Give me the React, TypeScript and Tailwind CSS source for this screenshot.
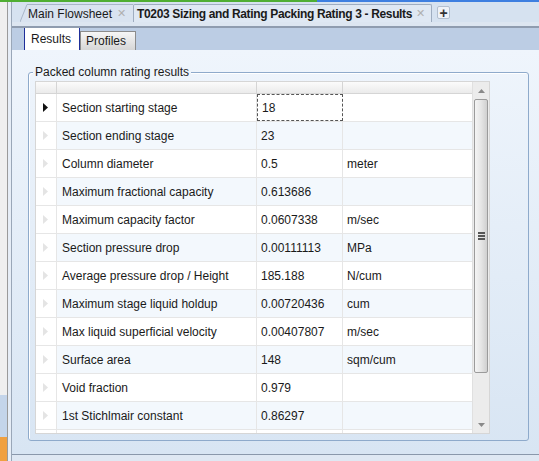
const rows: [string, string, string][] = [
  ["Section starting stage", "18", ""],
  ["Section ending stage", "23", ""],
  ["Column diameter", "0.5", "meter"],
  ["Maximum fractional capacity", "0.613686", ""],
  ["Maximum capacity factor", "0.0607338", "m/sec"],
  ["Section pressure drop", "0.00111113", "MPa"],
  ["Average pressure drop / Height", "185.188", "N/cum"],
  ["Maximum stage liquid holdup", "0.00720436", "cum"],
  ["Max liquid superficial velocity", "0.00407807", "m/sec"],
  ["Surface area", "148", "sqm/cum"],
  ["Void fraction", "0.979", ""],
  ["1st Stichlmair constant", "0.86297", ""],
];

const Arrow = ({ active }: { active: boolean }) => (
  <svg width="6" height="9" viewBox="0 0 6 9">
    <path d="M0 0 L5 4.5 L0 9 Z" fill={active ? "#111" : "#e4e4e4"} />
  </svg>
);

const Scrollbar = () => (
  <div className="w-[17px] shrink-0 flex flex-col bg-[#ececec] border-l border-[#e0e0e0]">
    <div className="h-[17px] shrink-0 flex items-center justify-center">
      <svg width="7" height="4" viewBox="0 0 7 4">
        <path d="M0 4 L3.5 0 L7 4 Z" fill="#8a8a8a" />
      </svg>
    </div>
    <div className="mx-[1px] h-[274px] shrink-0 rounded-[2px] border border-[#9b9b9b] bg-gradient-to-r from-[#f4f4f4] via-[#e6e6e6] to-[#d0d0d0] flex items-center justify-center">
      <div className="flex flex-col gap-[1px]">
        <div className="w-[7px] h-[2px] bg-[#555]" />
        <div className="w-[7px] h-[2px] bg-[#555]" />
        <div className="w-[7px] h-[2px] bg-[#555]" />
      </div>
    </div>
    <div className="flex-1" />
    <div className="h-[17px] shrink-0 flex items-center justify-center">
      <svg width="7" height="4" viewBox="0 0 7 4">
        <path d="M0 0 L3.5 4 L7 0 Z" fill="#8a8a8a" />
      </svg>
    </div>
  </div>
);

export default function App() {
  return (
    <div
      className="w-[539px] h-[461px] overflow-hidden flex flex-col bg-[#d9e5f2] text-[12px] text-[#1a1a1a]"
      style={{ fontFamily: '"Liberation Sans", Arial, sans-serif' }}
    >
      <div className="h-[2px] shrink-0 flex">
        <div className="w-[317px] bg-[#4fae33]" />
        <div className="flex-1 bg-[#3e7fe0]" />
      </div>
      <div className="flex-1 flex">
        <div className="w-[8px] flex flex-col border-r border-[#9a9a9a]">
          <div className="h-[393px] bg-[#efefef]" />
          <div className="flex-1 bg-[#c4d5ea]" />
          <div className="h-[24px] bg-[#f0a040]" />
        </div>
        <div className="flex-1 flex flex-col pl-[3px] bg-[#e6edf6]">
          <div className="flex-1 flex flex-col border-l border-[#9aa7b8]">
            <div className="h-[20px] shrink-0 flex items-end bg-[#d6e2f0] pl-[8px]">
              <div className="h-[18px] flex items-stretch">
                <svg width="8" height="18" viewBox="0 0 8 18">
                  <path d="M0 18 L7 0.5 L8 0.5 L8 18 Z" fill="#d9e3f0" />
                  <path d="M0 18 L7 0.5 L8 0.5" stroke="#a9b6c8" fill="none" />
                </svg>
                <div className="flex items-center gap-[5px] pr-[7px] border-t border-[#a9b6c8] bg-[#d9e3f0]">
                  <span>Main Flowsheet</span>
                  <span className="text-[#b0b0b0] text-[11px]">✕</span>
                </div>
                <div className="flex items-center gap-[4px] pl-[3px] pr-[6px] border border-b-0 border-[#9fadc0] bg-[#dfe8f3] rounded-t-[2px]">
                  <span className="font-bold tracking-[-0.34px]">T0203 Sizing and Rating Packing Rating 3 - Results</span>
                  <span className="text-[#b0b0b0] text-[11px]">✕</span>
                </div>
                <div className="ml-[5px] mb-[3px] self-end w-[13px] h-[13px] border border-[#b3bfcf] rounded-[2px] bg-[#eef2f8] flex items-center justify-center text-[#333] text-[14px] leading-none font-bold">
                  +
                </div>
              </div>
            </div>
            <div className="h-[6px] shrink-0 bg-[#dde6f1] border-b-2 border-[#8f9caf]" />
            <div className="h-[22px] shrink-0 flex items-end bg-[#bccde4] pl-[12px]">
              <div className="h-[22px] w-[56px] bg-white border-x border-[#1f2f9a] flex items-center pl-[6px]">
                Results
              </div>
              <div className="h-[19px] w-[56px] border border-b-0 border-[#8c8c8c] bg-gradient-to-b from-[#f6f6f6] to-[#d6d6d6] flex items-center pl-[5px]">
                Profiles
              </div>
            </div>
            <div className="flex-1 bg-gradient-to-b from-[#eff5fc] to-[#d8e5f3] pl-[16px] pr-[10px] pt-[22px] border-b border-[#8a98ab]">
              <div className="relative h-[369px] border border-[#8eaacb] rounded-[3px] shadow-[inset_1px_1px_0_#ffffff] pl-[6px] pr-[38px] pt-[8px]">
                <div className="absolute left-[4px] -top-[8px] px-[2px] bg-[#eef4fb] leading-[14px]">
                  Packed column rating results
                </div>
                <div className="h-[353px] flex border border-[#d6d6d6] bg-white overflow-hidden">
                  <div className="flex-1 flex flex-col overflow-hidden">
                    <div className="h-[12px] shrink-0 flex bg-gradient-to-b from-[#fbfbfb] to-[#ebebeb] border-b border-[#d5d5d5]">
                      <div className="w-[21px] border-r border-[#d5d5d5]" />
                      <div className="w-[200px] border-r border-[#d5d5d5]" />
                      <div className="w-[86px] border-r border-[#d5d5d5]" />
                      <div className="flex-1" />
                    </div>
                    {[...rows, ["", "", ""] as [string, string, string]].map((r, i) => (
                      <div
                        key={i}
                        className={`h-[28px] shrink-0 flex border-b border-[#e6e6e6] ${i % 2 === 1 ? "bg-[#f3f8fd]" : "bg-white"}`}
                      >
                        <div className="w-[21px] bg-white border-r border-[#e6e6e6] flex items-center justify-center">
                          <Arrow active={i === 0} />
                        </div>
                        <div className="w-[200px] border-r border-[#e6e6e6] flex items-center pl-[5px]">
                          {r[0]}
                        </div>
                        <div
                          className={`w-[86px] flex items-center pl-[4px] ${i === 0 ? "border border-dashed border-[#555]" : "border-r border-[#e6e6e6]"}`}
                        >
                          {r[1]}
                        </div>
                        <div className="flex-1 flex items-center pl-[4px]">{r[2]}</div>
                      </div>
                    ))}
                  </div>
                  <Scrollbar />
                </div>
              </div>
            </div>
            <div className="h-[6px] shrink-0 bg-[#dfe8f3]" />
          </div>
        </div>
      </div>
    </div>
  );
}
